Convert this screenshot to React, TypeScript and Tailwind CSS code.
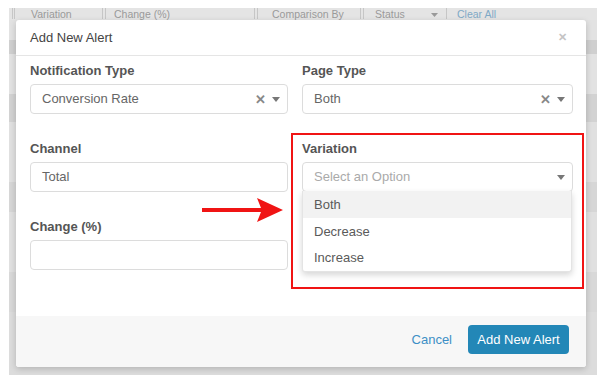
import React from 'react';

const Caret = () => (
  <svg width="8" height="5" viewBox="0 0 8 5" className="shrink-0">
    <path d="M0 0 L8 0 L4 5 Z" fill="#777" />
  </svg>
);

const Clear = () => (
  <span className="text-[13px] font-bold leading-none text-[#888]">✕</span>
);

interface SelectProps {
  value?: string;
  placeholder?: string;
  clearable?: boolean;
}

const SelectBox: React.FC<SelectProps> = ({ value, placeholder, clearable }) => (
  <div className="h-[30px] border border-[#dcdcdc] rounded-[4px] bg-white pl-[11px] pr-[7px] flex items-center">
    <span className={`flex-1 text-[13px] ${value ? 'text-[#666]' : 'text-[#aaa]'}`}>
      {value || placeholder}
    </span>
    <div className="flex items-center gap-[6px]">
      {clearable && <Clear />}
      <Caret />
    </div>
  </div>
);

const Field: React.FC<{ label: string; children: React.ReactNode }> = ({ label, children }) => (
  <div className="relative">
    <div className="text-[13px] font-bold leading-[18px] text-[#555] mb-[4px]">{label}</div>
    {children}
  </div>
);

const App: React.FC = () => {
  const options = ['Both', 'Decrease', 'Increase'];

  return (
    <div className="w-[604px] h-[385px] bg-white pt-[8px] pl-[9px] font-['Liberation_Sans',Arial,sans-serif]">
      <div className="relative w-[588px] h-[367px] bg-[#dcdcdc] overflow-hidden">
        {/* page behind the modal */}
        <div className="h-[12px] bg-[#e4e4e4] flex items-end text-[10.5px] leading-none text-[#9a9a9a] pb-[1px]">
          <div className="w-[6px] h-full border-r-[3px] border-double border-[#c6c6c6]" />
          <div className="w-[91px] h-full pl-[16px] flex items-end border-r-[4px] border-double border-[#c6c6c6]">Variation</div>
          <div className="w-[152px] h-full pl-[8px] flex items-end border-r-[4px] border-double border-[#c6c6c6]">Change (%)</div>
          <div className="w-[106px] h-full pl-[14px] flex items-end border-r-[4px] border-double border-[#c6c6c6]">Comparison By</div>
          <div className="w-[83px] h-full pl-[11px] pr-[8px] flex items-end justify-between border-r border-[#c6c6c6]">
            <span>Status</span>
            <svg width="7" height="4" viewBox="0 0 7 4" className="mb-[2px]"><path d="M0 0 L7 0 L3.5 4 Z" fill="#999" /></svg>
          </div>
          <div className="pl-[10px] text-[#7fa9c6]">Clear All</div>
        </div>
        <div className="h-[20px] bg-[#e2e2e2]" />
        <div className="h-[14px] bg-[#cfcfcf]" />
        <div className="h-[40px] bg-[#e2e2e2]" />
        <div className="h-[28px] bg-[#d2d2d2]" />
        <div className="h-[60px] bg-[#e0e0e0]" />
        <div className="h-[30px] bg-[#d6d6d6]" />
        <div className="h-[60px] bg-[#e0e0e0]" />
        <div className="h-[40px] bg-[#d8d8d8]" />

        {/* modal */}
        <div className="absolute left-[7px] top-[12px] w-[570px] h-[347px] bg-white rounded-[3px] shadow-[0_2px_6px_rgba(0,0,0,0.18)] flex flex-col">
          <div className="h-[36px] shrink-0 border-b border-[#e5e5e5] pl-[14px] pr-[19px] flex items-center justify-between">
            <span className="text-[13px] text-[#444]">Add New Alert</span>
            <span className="text-[11px] font-bold text-[#c4c4c4] leading-none">✕</span>
          </div>

          <div className="relative flex-1 pt-[6px] pl-[14px] pr-[13px]">
            <div className="grid grid-cols-[258px_271px] gap-x-[14px] gap-y-[26px]">
              <Field label="Notification Type">
                <SelectBox value="Conversion Rate" clearable />
              </Field>
              <Field label="Page Type">
                <SelectBox value="Both" clearable />
              </Field>
              <Field label="Channel">
                <div className="h-[30px] border border-[#dcdcdc] rounded-[4px] px-[11px] flex items-center text-[13px] text-[#666]">Total</div>
              </Field>
              <Field label="Variation">
                <SelectBox placeholder="Select an Option" />
                <div className="absolute left-0 right-[1px] top-full -mt-[1px] z-20 bg-white rounded-b-[3px] shadow-[0_3px_6px_rgba(0,0,0,0.16)] border-x border-b border-[#e4e4e4]">
                  {options.map((o, i) => (
                    <div
                      key={o}
                      className={`${i === 2 ? 'h-[26px]' : 'h-[27px]'} px-[11px] flex items-center text-[13px] text-[#5a5a5a] ${i === 0 ? 'bg-[#f2f2f2]' : ''}`}
                    >
                      {o}
                    </div>
                  ))}
                </div>
              </Field>
              <Field label="Change (%)">
                <div className="h-[30px] border border-[#dcdcdc] rounded-[4px]" />
              </Field>
              <div />
            </div>

            {/* annotation */}
            <div className="absolute left-[275px] top-[77px] w-[293px] h-[156px] border-2 border-[#f01414] z-30 pointer-events-none" />
            <svg width="81" height="24" viewBox="0 0 81 24" className="absolute left-[186px] top-[142px] z-30">
              <polygon points="0,10 59,10 55,0 81,12 55,24 59,14 0,14" fill="#f01414" />
            </svg>
          </div>

          <div className="h-[51px] shrink-0 bg-[#f7f7f7] rounded-b-[3px] flex justify-end items-start pt-[9px] pr-[17px] gap-[16px]">
            <span className="text-[13px] leading-[29px] text-[#3d8fc6]">Cancel</span>
            <button className="h-[29px] w-[101px] bg-[#2387b7] rounded-[4px] text-white text-[13px]">Add New Alert</button>
          </div>
        </div>
      </div>
    </div>
  );
};

export default App;
